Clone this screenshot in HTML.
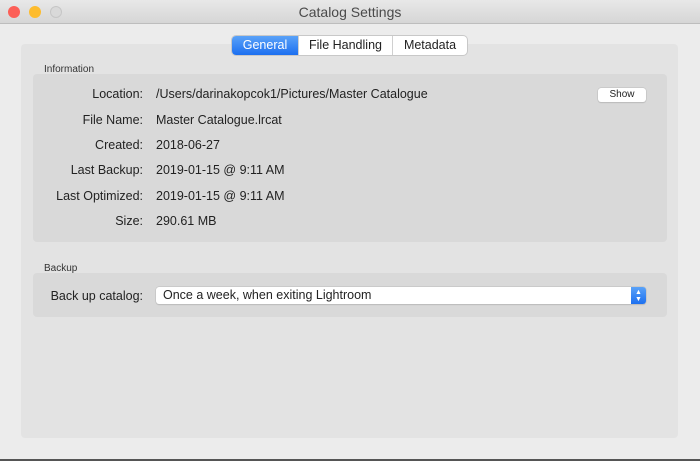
<!DOCTYPE html>
<html><head><meta charset="utf-8"><style>
*{margin:0;padding:0;box-sizing:border-box}
body{width:700px;height:461px;overflow:hidden;background:#ececec;font-family:"Liberation Sans",sans-serif;position:relative;color:#222}
.title{position:absolute;left:0;top:0;width:700px;height:24px;background:linear-gradient(#e8e8e8,#d6d6d6);border-bottom:1px solid #bdbdbd;text-align:center;font-size:14px;line-height:24px;color:#4a4a4a}
.dot{position:absolute;top:6px;width:12px;height:12px;border-radius:50%}
.outer{position:absolute;left:21px;top:44px;width:657px;height:394px;background:#e3e3e3;border-radius:4px}
.tabs{position:absolute;left:232px;top:36px;height:19px;display:flex;border-radius:4px;box-shadow:0 0 0 1px #c8c8c8;background:#fff;font-size:12.5px;line-height:19px;overflow:hidden}
.tabs div{text-align:center;border-left:1px solid #d0d0d0}
.tabs .a{background:linear-gradient(#5aa2f8,#1c6ff0);color:#fff;border:none}
.box{position:absolute;left:33px;width:634px;background:#d9d9d9;border-radius:4px}
.sec{position:absolute;left:44px;font-size:10px;color:#333}
.lab{position:absolute;right:557px;font-size:12.5px;text-align:right;white-space:nowrap}
.val{position:absolute;left:156px;font-size:12.5px;white-space:nowrap}
.btn{position:absolute;left:598px;top:88px;width:48px;height:14px;background:#fff;border-radius:3px;box-shadow:0 0 0 .5px #bbb,0 1px 1px rgba(0,0,0,.15);font-size:10px;text-align:center;line-height:14px}
.pop{position:absolute;left:156px;top:287px;width:490px;height:17px;background:#fff;border-radius:3px;box-shadow:0 0 0 .5px #bbb,0 1px 1px rgba(0,0,0,.15);font-size:12.5px;line-height:17px;padding-left:7px}
.arr{position:absolute;right:0;top:0;width:15px;height:17px;background:linear-gradient(#5aa2f8,#1c6ff0);border-radius:0 3px 3px 0;color:#fff;font-size:7px;line-height:7px;text-align:center;padding-top:2px}
</style></head><body>
<div class="title">Catalog Settings
<div class="dot" style="left:8px;background:#fc5f57"></div>
<div class="dot" style="left:29px;background:#fdbc2e"></div>
<div class="dot" style="left:50px;background:#d9d9d9;border:1px solid #c6c6c6"></div>
</div>
<div class="outer"></div>
<div class="tabs"><div class="a" style="width:66px">General</div><div style="width:94px">File Handling</div><div style="width:75px">Metadata</div></div>
<div class="sec" style="top:64px">Information</div>
<div class="box" style="top:74px;height:168px"></div>
<div class="lab" style="top:87px">Location:</div><div class="val" style="top:87px">/Users/darinakopcok1/Pictures/Master Catalogue</div>
<div class="btn">Show</div>
<div class="lab" style="top:113px">File Name:</div><div class="val" style="top:113px">Master Catalogue.lrcat</div>
<div class="lab" style="top:138px">Created:</div><div class="val" style="top:138px">2018-06-27</div>
<div class="lab" style="top:163px">Last Backup:</div><div class="val" style="top:163px">2019-01-15 @ 9:11 AM</div>
<div class="lab" style="top:189px">Last Optimized:</div><div class="val" style="top:189px">2019-01-15 @ 9:11 AM</div>
<div class="lab" style="top:214px">Size:</div><div class="val" style="top:214px">290.61 MB</div>
<div class="sec" style="top:263px">Backup</div>
<div class="box" style="top:273px;height:44px"></div>
<div class="lab" style="top:289px">Back up catalog:</div>
<div class="pop">Once a week, when exiting Lightroom<div class="arr">▲<br>▼</div></div>
<div style="position:absolute;left:0;top:459px;width:700px;height:2px;background:#555"></div>
</body></html>
